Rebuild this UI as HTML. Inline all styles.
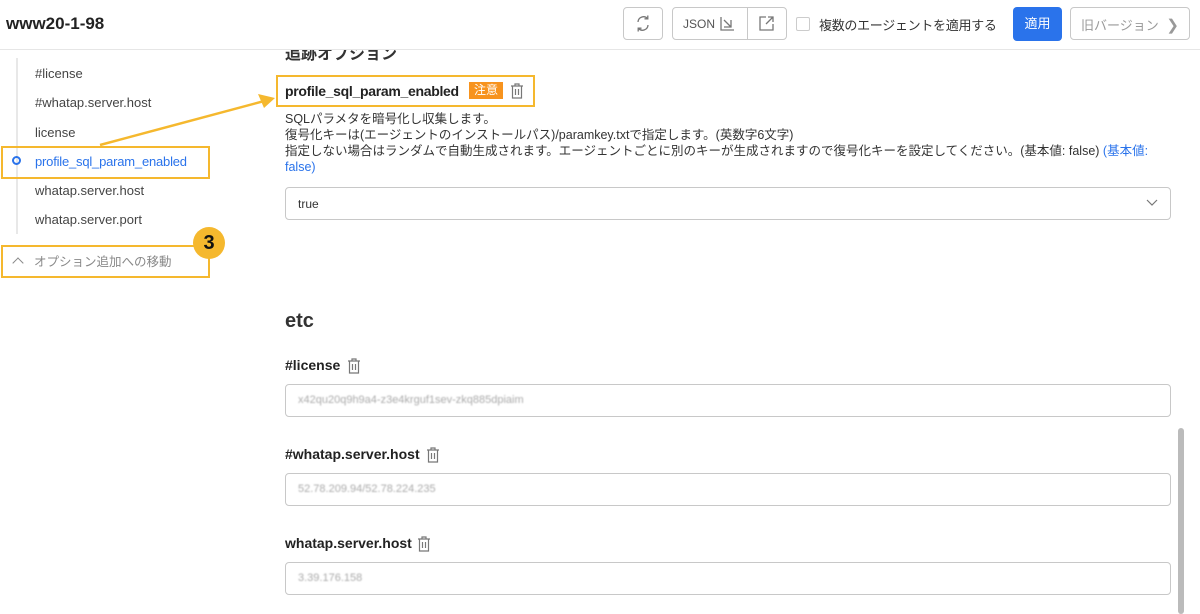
<!DOCTYPE html>
<html><head><meta charset="utf-8"><style>
*{box-sizing:border-box;margin:0;padding:0}
body{width:1200px;height:614px;overflow:hidden;background:#fff;font-family:"Liberation Sans","Noto Sans CJK JP",sans-serif;color:#333;position:relative}
.a{position:absolute}
.btn{position:absolute;border:1px solid #c8c8c8;border-radius:4px;background:#fff;height:33px;top:7px}
.side{font-size:13px;color:#444}
.inp{position:absolute;left:285px;width:886px;height:33px;border:1px solid #c8c8c8;border-radius:4px;font-size:11px;color:#aaa;padding:9px 12px;filter:blur(0.2px)}
.inp span{filter:blur(0.7px);display:inline-block}
.lbl{position:absolute;left:285px;font-size:14px;font-weight:bold;color:#222}
.y{position:absolute;border:2px solid #f5b82e}
</style></head><body>
<div class="a" style="left:285px;top:40px;font-size:16px;font-weight:bold;color:#333">追跡オプション</div>
<div class="a" style="left:0;top:0;width:1200px;height:50px;background:#fff;border-bottom:1px solid #e6e6e6"></div>
<div class="a" style="left:6px;top:14px;font-size:17px;font-weight:bold;color:#222">www20-1-98</div>
<div class="btn" style="left:623px;width:40px"><svg width="38" height="31" viewBox="0 0 38 31"><path d="M14 14a5.5 5.5 0 0 1 9.5-3.5M24 17a5.5 5.5 0 0 1-9.5 3.5" stroke="#777" stroke-width="1.3" fill="none"/><path d="M23.8 7.5v3.3h-3.3M14.2 23.5v-3.3h3.3" stroke="#777" stroke-width="1.3" fill="none"/></svg></div>
<div class="btn" style="left:672px;width:115px"></div>
<div class="a" style="left:747px;top:8px;width:1px;height:31px;background:#c8c8c8"></div>
<div class="a" style="left:683px;top:17px;font-size:12px;color:#555">JSON</div>
<svg class="a" style="left:719px;top:15px" width="18" height="18"><path d="M2 2v13h13M5 5l7 7M5 12h7V5" stroke="#777" stroke-width="1.3" fill="none"/></svg>
<svg class="a" style="left:758px;top:15px" width="18" height="18"><path d="M8 2H2v13h13V9M10 2h5v5M15 2L8 9" stroke="#777" stroke-width="1.3" fill="none"/></svg>
<div class="a" style="left:796px;top:17px;width:14px;height:14px;border:1px solid #ccc;border-radius:2px"></div>
<div class="a" style="left:819px;top:15px;font-size:13px;color:#333;letter-spacing:-0.3px">複数のエージェントを適用する</div>
<div class="a" style="left:1013px;top:7px;width:49px;height:34px;background:#2a73eb;border-radius:4px;color:#fff;font-size:13px;text-align:center;line-height:34px">適用</div>
<div class="btn" style="left:1070px;width:120px;font-size:13px;color:#999;padding:7px 10px">旧バージョン <span style="font-size:15px;margin-left:4px">&#x276F;</span></div>

<div class="a" style="left:16px;top:58px;width:2px;height:176px;background:#e8e8e8"></div>
<div class="a side" style="left:35px;top:66px">#license</div>
<div class="a side" style="left:35px;top:95px">#whatap.server.host</div>
<div class="a side" style="left:35px;top:125px">license</div>
<div class="a" style="left:12px;top:156px;width:9px;height:9px;border:2px solid #2a73eb;border-radius:50%"></div>
<div class="a side" style="left:35px;top:154px;color:#2a73eb;letter-spacing:-0.2px">profile_sql_param_enabled</div>
<div class="a side" style="left:35px;top:183px">whatap.server.host</div>
<div class="a side" style="left:35px;top:212px">whatap.server.port</div>
<div class="a side" style="left:10px;top:251px;color:#888;font-size:12.5px"><span style="display:inline-block;width:8px;height:8px;border-left:1.3px solid #888;border-top:1.3px solid #888;transform:rotate(45deg);margin:0 12px 0 4px;position:relative;top:1px"></span>オプション追加への移動</div>
<div class="y" style="left:1px;top:146px;width:209px;height:33px"></div>
<div class="y" style="left:1px;top:245px;width:209px;height:33px"></div>
<div class="a" style="left:193px;top:227px;width:32px;height:32px;border-radius:50%;background:#f5b82e;color:#111;font-weight:bold;font-size:20px;text-align:center;line-height:32px">3</div>

<div class="y" style="left:276px;top:75px;width:259px;height:32px"></div>
<div class="a" style="left:285px;top:83px;font-size:14px;font-weight:bold;color:#222;letter-spacing:-0.3px">profile_sql_param_enabled</div>
<div class="a" style="left:469px;top:82px;width:34px;height:17px;background:#f7931e;color:#fff;font-size:12px;text-align:center;line-height:17px">注意</div>
<svg class="a" style="left:510px;top:83px" width="14" height="16"><path d="M1 3h12M5 3V1h4v2M2.5 3v12h9V3M5.5 6v6M8.5 6v6" stroke="#777" stroke-width="1.2" fill="none"/></svg>
<svg class="a" style="left:0;top:0" width="300" height="160"><path d="M100 145L268 100" stroke="#f5b82e" stroke-width="2.5"/><path d="M275 98L258 94L264 108Z" fill="#f5b82e"/></svg>
<div class="a" style="left:285px;top:111px;font-size:12.5px;line-height:16px;color:#333;width:890px">SQLパラメタを暗号化し収集します。<br>復号化キーは(エージェントのインストールパス)/paramkey.txtで指定します。(英数字6文字)<br>指定しない場合はランダムで自動生成されます。エージェントごとに別のキーが生成されますので復号化キーを設定してください。(基本値: false) <span style="color:#2a73eb">(基本値:<br>false)</span></div>
<div class="inp" style="top:187px;color:#333;font-size:12px">true<svg style="position:absolute;right:12px;top:11px" width="12" height="8"><path d="M1 1l5 5 5-5" stroke="#777" stroke-width="1.2" fill="none"/></svg></div>

<div class="a" style="left:285px;top:310px;font-size:20px;font-weight:bold;color:#333">etc</div>
<div class="lbl" style="top:357px">#license</div>
<svg class="a" style="left:347px;top:358px" width="14" height="16"><path d="M1 3h12M5 3V1h4v2M2.5 3v12h9V3M5.5 6v6M8.5 6v6" stroke="#777" stroke-width="1.2" fill="none"/></svg>
<div class="inp" style="top:384px"><span>x42qu20q9h9a4-z3e4krguf1sev-zkq885dpiaim</span></div>
<div class="lbl" style="top:446px">#whatap.server.host</div>
<svg class="a" style="left:426px;top:447px" width="14" height="16"><path d="M1 3h12M5 3V1h4v2M2.5 3v12h9V3M5.5 6v6M8.5 6v6" stroke="#777" stroke-width="1.2" fill="none"/></svg>
<div class="inp" style="top:473px"><span>52.78.209.94/52.78.224.235</span></div>
<div class="lbl" style="top:535px">whatap.server.host</div>
<svg class="a" style="left:417px;top:536px" width="14" height="16"><path d="M1 3h12M5 3V1h4v2M2.5 3v12h9V3M5.5 6v6M8.5 6v6" stroke="#777" stroke-width="1.2" fill="none"/></svg>
<div class="inp" style="top:562px"><span>3.39.176.158</span></div>
<div class="a" style="left:1178px;top:428px;width:6px;height:186px;background:#bbb;border-radius:3px"></div>
</body></html>
